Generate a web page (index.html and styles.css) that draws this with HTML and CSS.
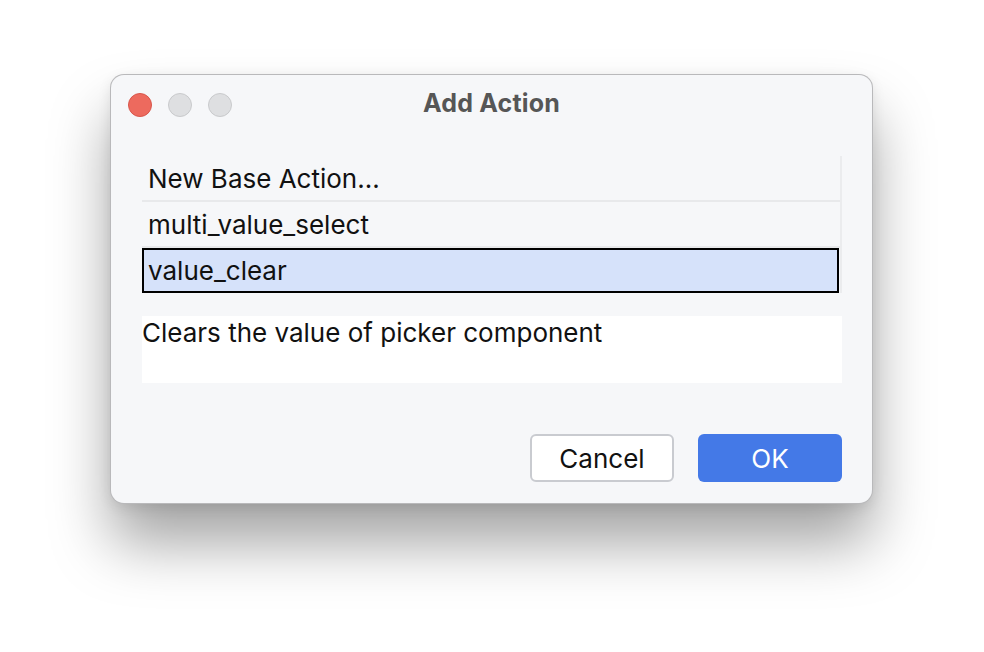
FILE: index.html
```html
<!DOCTYPE html>
<html>
<head>
<meta charset="utf-8">
<link rel="stylesheet" href="styles.css">
</head>
<body>
<div class="stage">
  <div class="window">
    <div class="titlebar">
      <div class="lights">
        <span class="light red"></span>
        <span class="light grey"></span>
        <span class="light grey"></span>
      </div>
      <div class="title">Add Action</div>
      <div></div>
    </div>
    <div class="content">
      <div class="list">
        <div class="row">New Base Action...</div>
        <div class="sep"></div>
        <div class="row">multi_value_select</div>
        <div class="sep"></div>
        <div class="row selected">value_clear</div>
      </div>
      <div class="desc">Clears the value of picker component</div>
      <div class="buttons">
        <button class="btn cancel">Cancel</button>
        <button class="btn ok">OK</button>
      </div>
    </div>
  </div>
</div>
</body>
</html>
```
FILE: styles.css
```css
html, body {
  margin: 0;
  padding: 0;
  background: #ffffff;
}
body {
  width: 984px;
  height: 652px;
  overflow: hidden;
  font-family: Inter, "Noto Sans", sans-serif;
}
.stage {
  padding: 75px 0 0 111px;
}
.window {
  width: 761px;
  height: 428px;
  box-sizing: border-box;
  background: #f6f7f9;
  border-radius: 13px;
  box-shadow: 0 0 0 1px #b9b9bb, 0 40px 60px rgba(0,0,0,0.36), 0 4px 14px rgba(0,0,0,0.1);
  display: flex;
  flex-direction: column;
}
.titlebar {
  height: 58px;
  display: grid;
  grid-template-columns: 1fr auto 1fr;
  align-items: center;
}
.lights {
  display: flex;
  gap: 16px;
  padding-left: 17px;
  padding-top: 1px;
}
.light {
  width: 24px;
  height: 24px;
  box-sizing: border-box;
  border-radius: 50%;
}
.light.red {
  background: #ed6a5e;
  border: 1px solid #d8564b;
}
.light.grey {
  background: #dedfe1;
  border: 1px solid #c9cacc;
}
.title {
  font-weight: 700;
  font-size: 25px;
  color: #565656;
  letter-spacing: 0.2px;
  padding-bottom: 2px;
}
.content {
  padding: 23px 30px 0 31px;
}
.list {
  border-right: 2px solid #ebecee;
  display: flex;
  flex-direction: column;
}
.row {
  height: 44px;
  box-sizing: border-box;
  display: flex;
  align-items: center;
  padding-left: 6px;
  font-size: 26px;
  color: #111;
}
.sep {
  height: 2px;
  background: #e8e9eb;
}
.row.selected {
  border: 2px solid #000;
  background: #d6e2fa;
  padding-left: 4px;
  margin-right: 1px;
  height: 45px;
}
.desc {
  margin-top: 23px;
  height: 67px;
  box-sizing: border-box;
  background: #ffffff;
  font-size: 26px;
  color: #111;
  padding-top: 2px;
  line-height: 29px;
}
.buttons {
  margin-top: 51px;
  display: flex;
  justify-content: flex-end;
  gap: 24px;
}
.btn {
  width: 144px;
  height: 48px;
  box-sizing: border-box;
  border-radius: 6px;
  font-family: Inter, "Noto Sans", sans-serif;
  font-size: 26px;
  padding: 0;
}
.btn.cancel {
  background: #ffffff;
  border: 2px solid #c9cbd0;
  color: #111;
}
.btn.ok {
  background: #4479e7;
  border: none;
  color: #ffffff;
}
```
